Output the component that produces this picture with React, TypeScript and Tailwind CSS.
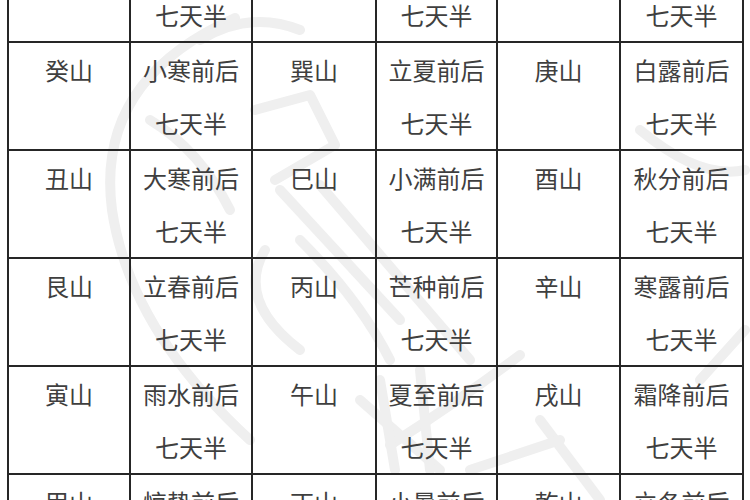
import React from "react";

type Cell = { a: string; b?: string };

const rows: Cell[][] = [
  [{ a: "" }, { a: "", b: "七天半" }, { a: "" }, { a: "", b: "七天半" }, { a: "" }, { a: "", b: "七天半" }],
  [{ a: "癸山" }, { a: "小寒前后", b: "七天半" }, { a: "巽山" }, { a: "立夏前后", b: "七天半" }, { a: "庚山" }, { a: "白露前后", b: "七天半" }],
  [{ a: "丑山" }, { a: "大寒前后", b: "七天半" }, { a: "巳山" }, { a: "小满前后", b: "七天半" }, { a: "酉山" }, { a: "秋分前后", b: "七天半" }],
  [{ a: "艮山" }, { a: "立春前后", b: "七天半" }, { a: "丙山" }, { a: "芒种前后", b: "七天半" }, { a: "辛山" }, { a: "寒露前后", b: "七天半" }],
  [{ a: "寅山" }, { a: "雨水前后", b: "七天半" }, { a: "午山" }, { a: "夏至前后", b: "七天半" }, { a: "戌山" }, { a: "霜降前后", b: "七天半" }],
  [{ a: "甲山" }, { a: "惊蛰前后", b: "七天半" }, { a: "丁山" }, { a: "小暑前后", b: "七天半" }, { a: "乾山" }, { a: "立冬前后", b: "七天半" }],
];

export default function App() {
  return (
    <div className="relative w-[750px] h-[500px] overflow-hidden bg-white font-['Noto_Sans_CJK_SC','Noto_Sans',sans-serif]">
      <svg className="absolute inset-0 pointer-events-none" width="750" height="500" viewBox="0 0 750 500" fill="none">
        <g stroke="#efefef" strokeWidth="10" strokeLinecap="round" strokeLinejoin="round">
          <path d="M235 18 Q 95 80 112 210 Q 130 330 250 440" />
          <path d="M200 40 Q 250 10 300 30" />
          <path d="M255 110 L 310 95 L 335 145 L 275 180" />
          <path d="M150 120 Q 200 150 230 210" />
          <path d="M265 250 Q 235 300 300 350" />
          <path d="M280 190 L 400 320" />
          <path d="M320 185 L 470 360" />
          <path d="M300 240 Q 360 300 390 360" />
          <path d="M360 400 L 440 470" />
          <path d="M390 445 Q 460 400 520 355" />
          <path d="M380 380 L 395 470" />
          <path d="M420 370 L 430 470" />
          <path d="M540 420 L 600 500" />
          <path d="M640 130 Q 700 180 745 170" />
          <path d="M700 380 L 745 330" />
          <path d="M470 470 L 560 440" />
        </g>
      </svg>
      <table className="relative mt-[-67px] ml-[7px] w-[735px] border-collapse table-fixed text-[24px] text-[#3f3f3f]">
        <colgroup>
          <col className="w-[122px]" />
          <col className="w-[122px]" />
          <col className="w-[124px]" />
          <col className="w-[121px]" />
          <col className="w-[123px]" />
          <col className="w-[123px]" />
        </colgroup>
        <tbody>
          {rows.map((r, ri) => (
            <tr key={ri} className="h-[108px]">
              {r.map((c, ci) => (
                <td
                  key={ci}
                  className="border-2 border-[#262626] align-top text-center p-0 leading-[53px]"
                >
                  <div className="h-[53px]">{c.a}</div>
                  {c.b && <div>{c.b}</div>}
                </td>
              ))}
            </tr>
          ))}
        </tbody>
      </table>
    </div>
  );
}
